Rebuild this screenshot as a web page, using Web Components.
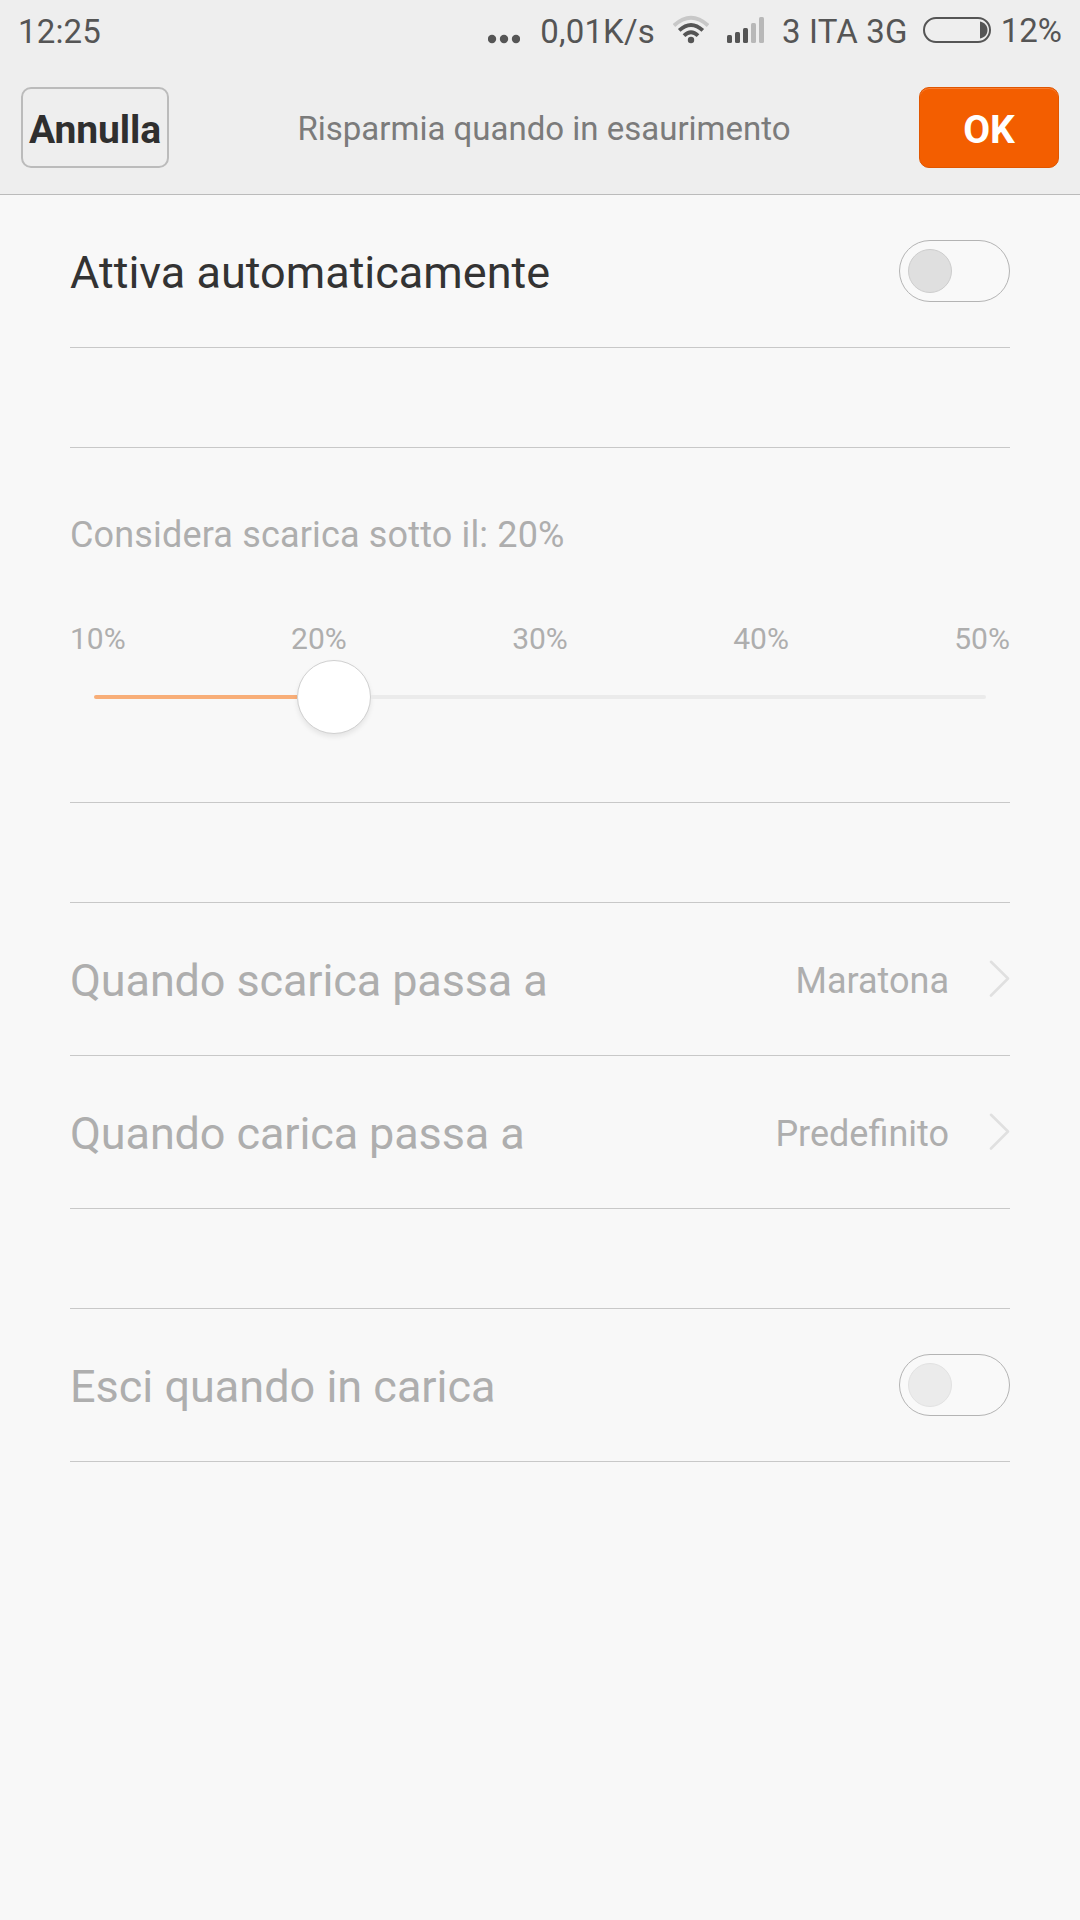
<!DOCTYPE html>
<html lang="it">
<head>
<meta charset="utf-8">
<title>Risparmia quando in esaurimento</title>
<style>
html, body {
    margin: 0;
    background: #f8f8f8;
}

body {
    width: 1080px;
    height: 1920px;
    overflow: hidden;
    font-family: Roboto, sans-serif;
}
</style>
</head>
<body>
<power-settings></power-settings>

<script>
class BaseElement extends HTMLElement {

    constructor() {
        super();
        const template = document.createElement('template');
        template.innerHTML = this.constructor.html;
        this.attachShadow({ mode: 'open' }).appendChild(template.content.cloneNode(true));
    }

    $(selector) {
        return this.shadowRoot.querySelector(selector);
    }
}

customElements.define('status-bar', class StatusBar extends BaseElement {
    static html = `
<style>
:host {
    display: flex;
    height: 62px;
    padding: 0 18px;
    box-sizing: border-box;
    justify-content: space-between;
    font-size: 33px;
    line-height: 63px;
    color: #555;
    white-space: nowrap;
}

.right {
    display: flex;
}

svg {
    display: block;
    height: 62px;
    fill: currentColor;
}

.time, .speed, .carrier { letter-spacing: .17px; }
.dots { margin-right: 20px; }
.wifi { margin: 0 18px 0 18px; }
.signal { margin-right: 18px; }
.battery { margin: 0 10px 0 15px; }
.percent { line-height: 61px; }
</style>
<span class="time">12:25</span>
<div class="right">
    <svg class="dots" width="32" viewBox="0 0 32 62">
        <circle cx="4" cy="39" r="4.2"/><circle cx="16" cy="39" r="4.2"/><circle cx="28" cy="39" r="4.2"/>
    </svg>
    <span class="speed">0,01K/s</span>
    <svg class="wifi" width="36" viewBox="0 0 36 62">
        <circle cx="18" cy="40" r="3.2"/>
        <g fill="none" stroke="currentColor" stroke-width="3.800">
            <path d="M1 25.500Q18 10 35 25.500" stroke="#c8c8c8"/>
            <path d="M6.200 30.400Q18 19.400 29.800 30.400"/>
            <path d="M11 35.600Q18 28.800 25 35.600"/>
        </g>
    </svg>
    <svg class="signal" width="37" viewBox="0 0 37 62">
        <rect x="0" y="35" width="5" height="8" rx="1.500"/>
        <rect x="8" y="32" width="5" height="11" rx="1.500"/>
        <rect x="16" y="28" width="5" height="15" rx="1.500"/>
        <rect x="24" y="23" width="5" height="20" rx="1.500" fill="#b8b8b8"/>
        <rect x="32" y="17" width="5" height="26" rx="1.500" fill="#b8b8b8"/>
    </svg>
    <span class="carrier">3 ITA 3G</span>
    <svg class="battery" width="68" viewBox="0 0 68 62">
        <rect x="1" y="18" width="66" height="24" rx="12" fill="none" stroke="currentColor" stroke-width="2"/>
        <path d="M57 21.500C62 22.500 64.500 26 64.500 30S62 37.500 57 38.500Z"/>
    </svg>
    <span class="percent">12%</span>
</div>
`;
});

customElements.define('bar-button', class BarButton extends BaseElement {
    static html = `
<style>
:host {
    display: block;
}

button {
    display: block;
    width: 100%;
    height: 81px;
    padding: 4px 0 0;
    box-sizing: border-box;
    border: 2px solid #bbb;
    border-radius: 10px;
    background: transparent;
    color: #2f2f2f;
    font: bold 39px Roboto, sans-serif;
    letter-spacing: -.1px;
    text-align: center;
}

:host([primary]) button {
    border: 1px solid #e05600;
    background: #f35e00;
    box-shadow: inset 0 1px 0 #f87c32;
    color: #fff;
}
</style>
<button><slot></slot></button>
`;
});

customElements.define('action-bar', class ActionBar extends BaseElement {
    static html = `
<style>
:host {
    display: flex;
    height: 133px;
    padding: 25px 21px 0;
    box-sizing: border-box;
    border-bottom: 1px solid #bbb;
    align-items: flex-start;
}

.title {
    flex: 1;
    font-size: 33px;
    line-height: 83px;
    color: #7b7b7b;
    text-align: center;
    white-space: nowrap;
}

::slotted([slot=cancel]) { width: 148px; }
::slotted([slot=ok]) { width: 140px; }
</style>
<slot name="cancel"></slot>
<span class="title"><slot></slot></span>
<slot name="ok"></slot>
`;
});

customElements.define('toggle-switch', class ToggleSwitch extends BaseElement {
    static html = `
<style>
:host {
    display: flex;
    width: 111px;
    height: 62px;
    padding-left: 8px;
    box-sizing: border-box;
    align-items: center;
    border: 1px solid #b4b4b4;
    border-radius: 31px;
    background: #f9f9f9;
}

.knob {
    width: 44px;
    height: 44px;
    box-sizing: border-box;
    border: 1px solid #cdcdcd;
    border-radius: 50%;
    background: #dfdfdf;
}

:host([disabled]) .knob {
    border-color: #e2e2e2;
    background: #ebebeb;
}
</style>
<div class="knob"></div>
`;
});

customElements.define('setting-row', class SettingRow extends BaseElement {
    static html = `
<style>
:host {
    display: flex;
    height: 153px;
    box-sizing: border-box;
    align-items: center;
    border-bottom: 1px solid #c8c8c8;
    color: #333;
    white-space: nowrap;
}

:host([disabled]) {
    color: #aeaeae;
}

.label {
    flex: 1;
    padding-top: 3px;
    font-size: 45px;
}

:host([tight]) .label {
    letter-spacing: -.12px;
}
</style>
<span class="label"><slot></slot></span>
<slot name="end"></slot>
`;
});

customElements.define('row-value', class RowValue extends BaseElement {
    static html = `
<style>
:host {
    display: flex;
    align-items: center;
    font-size: 36px;
}

span {
    padding-top: 3px;
}

svg {
    margin-left: 40px;
}
</style>
<span><slot></slot></span>
<svg width="21" height="38" viewBox="0 0 21 38" fill="none" stroke="#e0e0e0" stroke-width="2.600" stroke-linecap="round" stroke-linejoin="round">
    <path d="M2 1.800L19 18.500L2 35.500"/>
</svg>
`;
});

customElements.define('section-gap', class SectionGap extends BaseElement {
    static html = `
<style>
:host {
    display: block;
    height: 100px;
    box-sizing: border-box;
    border-bottom: 1px solid #c8c8c8;
}
</style>
`;
});

customElements.define('level-slider', class LevelSlider extends BaseElement {
    static html = `
<style>
:host {
    display: block;
    height: 355px;
    padding-top: 62px;
    box-sizing: border-box;
    border-bottom: 1px solid #c8c8c8;
    color: #aeaeae;
}

.caption {
    font-size: 36px;
    line-height: 50px;
    letter-spacing: .16px;
}

.ticks {
    display: flex;
    justify-content: space-between;
    margin-top: 58px;
    font-size: 30px;
    line-height: 42px;
}

.track {
    display: flex;
    height: 74px;
    margin: 0 24px;
    align-items: center;
}

.filled, .rest {
    height: 4px;
    background: #f8ae78;
    border-radius: 2px 0 0 2px;
}

.filled {
    width: 203px;
}

.rest {
    flex: 1;
    background: #ebebeb;
    border-radius: 0 2px 2px 0;
}

.thumb {
    width: 74px;
    height: 74px;
    box-sizing: border-box;
    border: 1px solid #d0d0d0;
    border-radius: 50%;
    background: #fff;
    box-shadow: 0 3px 5px rgba(0, 0, 0, .08);
}
</style>
<div class="caption"><slot></slot></div>
<div class="ticks"></div>
<div class="track">
    <div class="filled"></div>
    <div class="thumb"></div>
    <div class="rest"></div>
</div>
`;

    connectedCallback() {
        this.getAttribute('ticks').split(' ').forEach(tick => {
            const span = document.createElement('span');
            span.textContent = tick;
            this.$('.ticks').appendChild(span);
        });
    }
});

customElements.define('power-settings', class PowerSettings extends BaseElement {
    static html = `
<style>
:host {
    display: block;
}

header {
    background: #eee;
}

main {
    padding: 0 70px;
}
</style>
<header>
    <status-bar></status-bar>
    <action-bar>
        <bar-button slot="cancel">Annulla</bar-button>
        Risparmia quando in esaurimento
        <bar-button slot="ok" primary>OK</bar-button>
    </action-bar>
</header>
<main>
    <setting-row>Attiva automaticamente<toggle-switch slot="end"></toggle-switch></setting-row>
    <section-gap></section-gap>
    <level-slider ticks="10% 20% 30% 40% 50%">Considera scarica sotto il: 20%</level-slider>
    <section-gap></section-gap>
    <setting-row disabled tight>Quando scarica passa a<row-value slot="end">Maratona</row-value></setting-row>
    <setting-row disabled tight>Quando carica passa a<row-value slot="end">Predefinito</row-value></setting-row>
    <section-gap></section-gap>
    <setting-row disabled>Esci quando in carica<toggle-switch slot="end" disabled></toggle-switch></setting-row>
</main>
`;
});
</script>
</body>
</html>
